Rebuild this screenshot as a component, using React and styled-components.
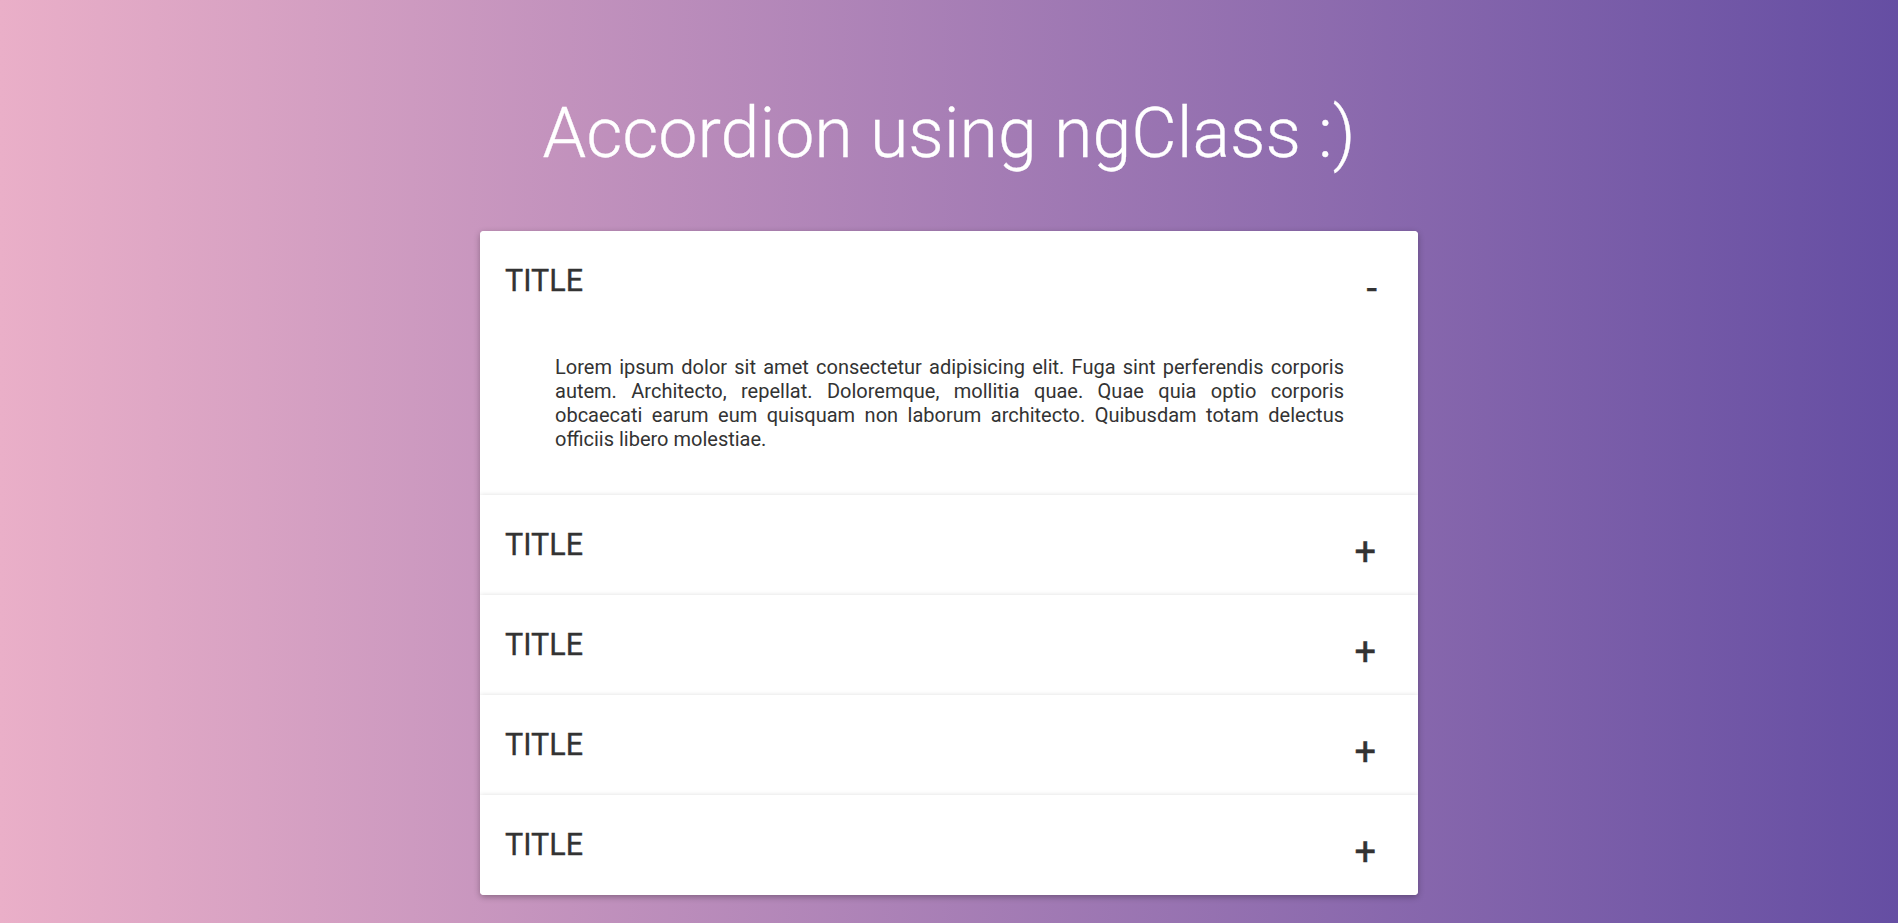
import React, { useState } from "react";
import styled, { createGlobalStyle } from "styled-components";

const GlobalStyle = createGlobalStyle`
  html, body {
    margin: 0;
    padding: 0;
  }
  body {
    min-height: 100vh;
    font-family: Roboto, "Liberation Sans", sans-serif;
    background: linear-gradient(to right, #eaafc8, #654ea3);
  }
`;

const Page = styled.div`
  min-height: 100vh;
  padding-top: 92px;
  box-sizing: border-box;
  display: flex;
  flex-direction: column;
  align-items: center;
`;

const Heading = styled.h1`
  margin: 0 0 57px;
  font-size: 70px;
  line-height: 82px;
  font-weight: 300;
  color: #fff;
  -webkit-text-stroke: 0.3px #fff;
`;

const Accordion = styled.div`
  width: 938px;
  background: #fff;
  border-radius: 4px;
  overflow: hidden;
  box-shadow: 0 2px 6px rgba(0, 0, 0, 0.3);
`;

const Item = styled.div`
  background: #fff;
  box-shadow: 0 0 5px rgba(0, 0, 0, 0.13);
`;

const Header = styled.div`
  display: flex;
  justify-content: space-between;
  align-items: flex-start;
  padding: 32px 42px 32px 25px;
  cursor: pointer;
`;

const Title = styled.h2`
  margin: 0;
  font-size: 30.5px;
  line-height: 36px;
  font-weight: 400;
  color: #333;
  -webkit-text-stroke: 0.3px #333;
`;

const Toggle = styled.span`
  font-size: 38px;
  line-height: 36px;
  font-weight: 400;
  color: #333;
  -webkit-text-stroke: 0.4px #333;
  margin: 7px ${(p) => (p.$open ? "-1px" : "0")} -7px 0;
`;

const Body = styled.div`
  display: ${(p) => (p.$open ? "block" : "none")};
  padding: 24px 74px 44px 75px;
`;

const Text = styled.p`
  margin: 0;
  font-size: 20px;
  line-height: 24px;
  color: #333;
  text-align: justify;
`;

const lorem =
  "Lorem ipsum dolor sit amet consectetur adipisicing elit. Fuga sint perferendis corporis autem. Architecto, repellat. Doloremque, mollitia quae. Quae quia optio corporis obcaecati earum eum quisquam non laborum architecto. Quibusdam totam delectus officiis libero molestiae.";

export default function App() {
  const [open, setOpen] = useState(0);
  const items = [0, 1, 2, 3, 4];

  return (
    <>
      <GlobalStyle />
      <Page>
        <Heading>Accordion using ngClass :)</Heading>
        <Accordion>
          {items.map((i) => (
            <Item key={i}>
              <Header onClick={() => setOpen(open === i ? -1 : i)}>
                <Title>TITLE</Title>
                <Toggle $open={open === i}>{open === i ? "-" : "+"}</Toggle>
              </Header>
              <Body $open={open === i}>
                <Text>{lorem}</Text>
              </Body>
            </Item>
          ))}
        </Accordion>
      </Page>
    </>
  );
}
